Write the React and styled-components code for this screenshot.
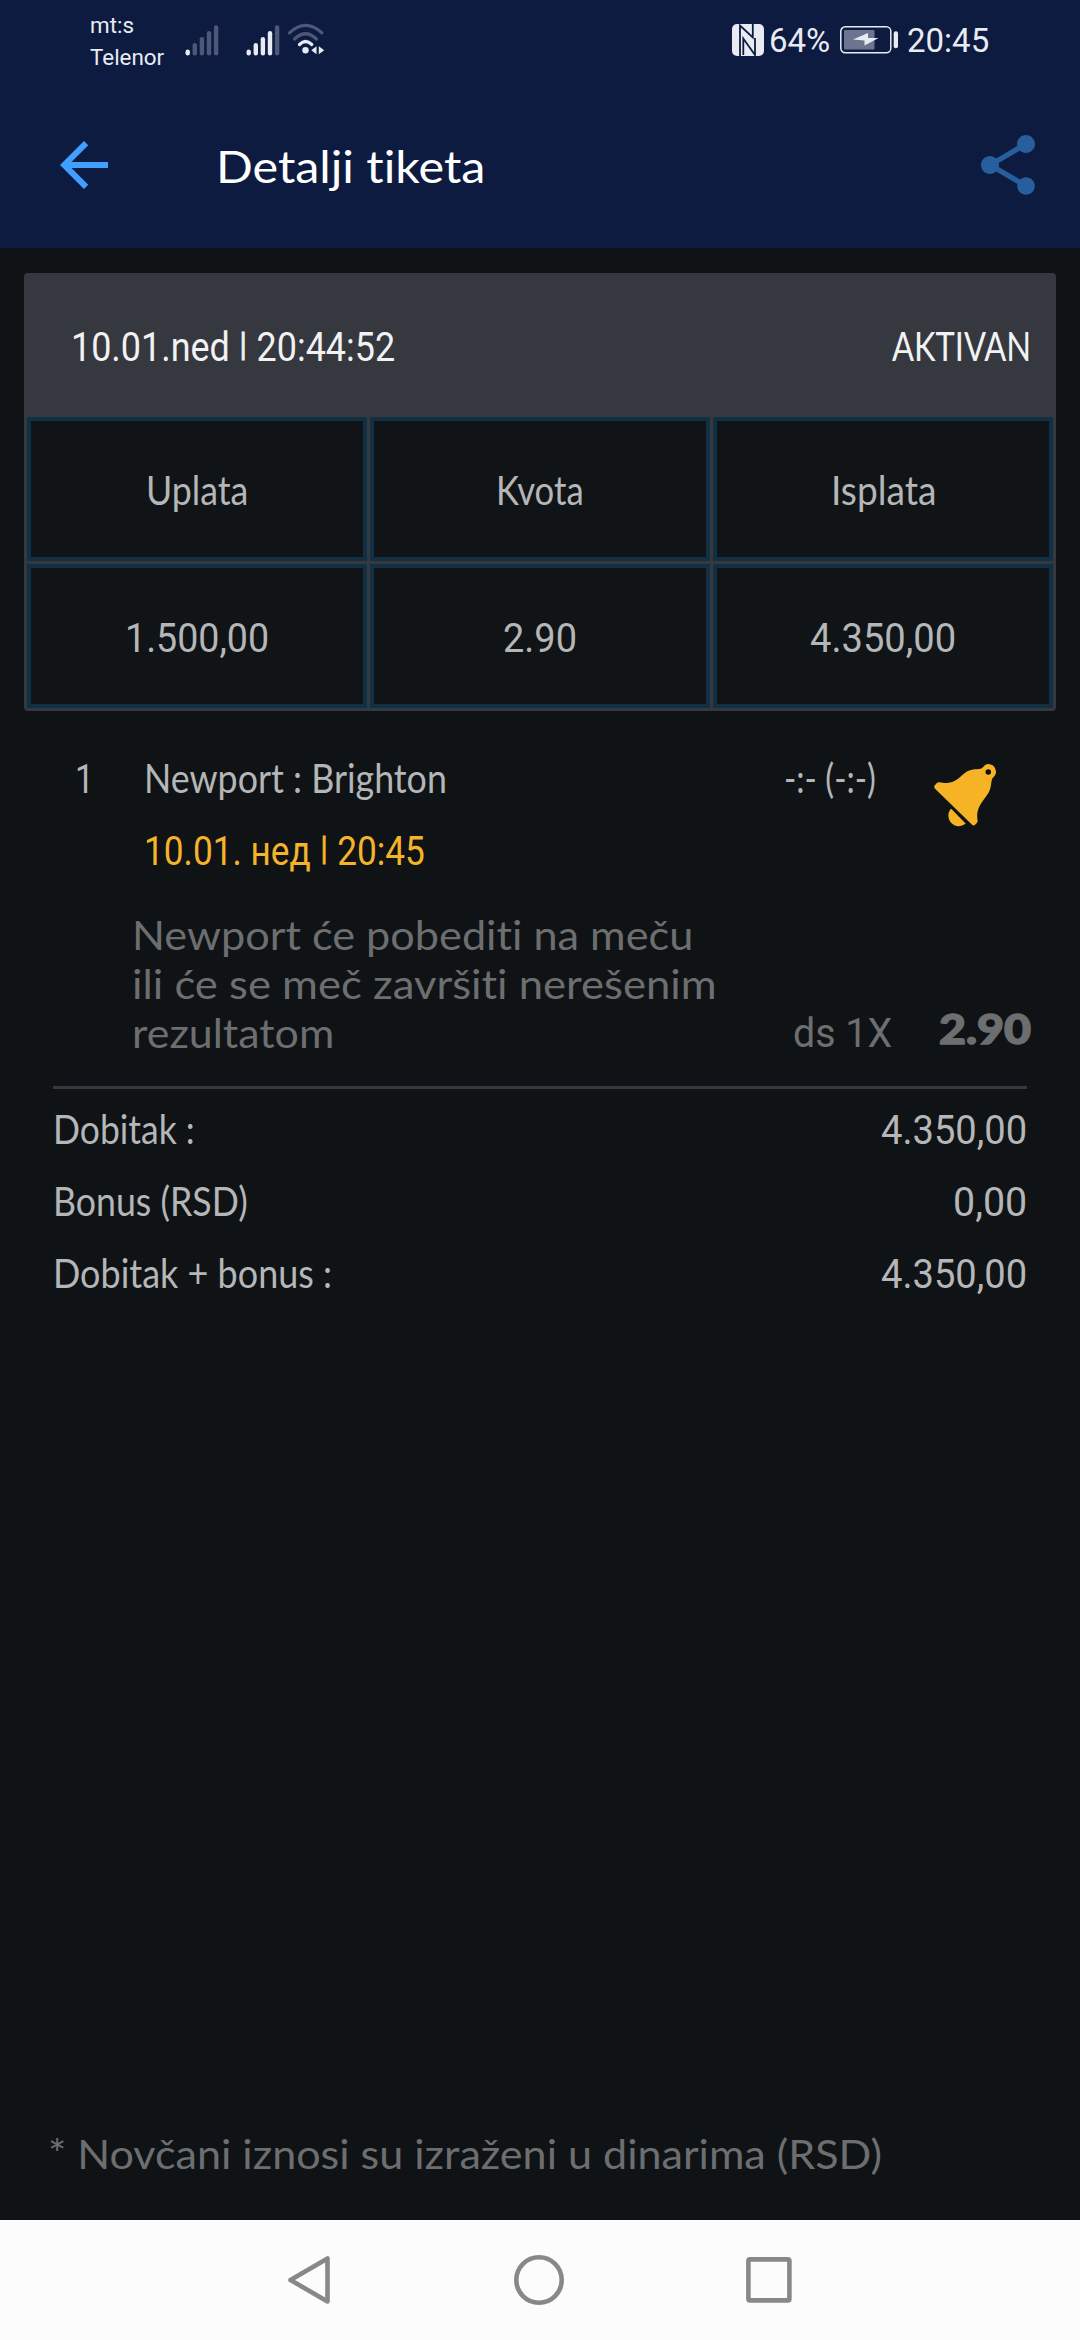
import { useLayoutEffect, useRef, useState } from "react";
import styled, { createGlobalStyle } from "styled-components";
import { MdArrowBack, MdShare } from "react-icons/md";

const stakes = [
  { text: "Uplata", width: 102 },
  { text: "Kvota", width: 88 },
  { text: "Isplata", width: 105 },
  { text: "1.500,00", width: 144 },
  { text: "2.90", width: 74 },
  { text: "4.350,00", width: 146 },
];

const totals = [
  { label: "Dobitak :", labelWidth: 142, value: "4.350,00", valueWidth: 146 },
  { label: "Bonus (RSD)", labelWidth: 195, value: "0,00", valueWidth: 74 },
  {
    label: "Dobitak + bonus :",
    labelWidth: 279,
    value: "4.350,00",
    valueWidth: 146,
  },
];

const description = [
  { text: "Newport će pobediti na meču", width: 561 },
  { text: "ili će se meč završiti nerešenim", width: 585 },
  { text: "rezultatom", width: 202 },
];

// squeezes a line of text horizontally until it takes the given width
function FitText({ width, numeric, children }) {
  const inner = useRef(null);
  const [ratio, setRatio] = useState(1);
  useLayoutEffect(() => {
    setRatio(width / inner.current.offsetWidth);
  }, [width, children]);
  return (
    <FitBox $width={width} $numeric={numeric}>
      <FitInner ref={inner} style={{ transform: `scaleX(${ratio})` }}>
        {children}
      </FitInner>
    </FitBox>
  );
}

function Signal({ level }) {
  const tops = [22.5, 16, 10, 4, -1.8];
  return (
    <svg width="34" height="36" viewBox="0 -4 34 36">
      {tops.map((top, i) => (
        <rect
          key={top}
          x={0.5 + i * 7.1}
          y={top}
          width="4.4"
          height={28.4 - top}
          rx="2.2"
          fill={i < level ? "#e9ebf3" : "#4d5879"}
        />
      ))}
    </svg>
  );
}

function Wifi() {
  return (
    <svg width="38" height="32" viewBox="0 0 38 32">
      <g fill="none" strokeWidth="3.2" strokeLinecap="round">
        <path d="M2.5 9.8Q18.5 -5 34.8 9.8" stroke="#4d5879" />
        <path d="M7.5 16Q18.5 5.5 29.5 16" stroke="#4d5879" />
        <path d="M12.5 21.5Q18.5 15.5 24.8 21.5" stroke="#e9ebf3" />
      </g>
      <circle cx="18.5" cy="27.3" r="3.2" fill="#e9ebf3" />
      <path d="M24.3 27.3l5.2-4v8z M31.8 23.3l5.4 4-5.4 4z" fill="#e9ebf3" />
    </svg>
  );
}

function Nfc() {
  return (
    <svg width="32" height="32" viewBox="0 0 32 32">
      <rect width="32" height="32" rx="5" fill="#e9ebf3" />
      <path
        d="M8 32V1.5L20.8 13.5V0M11.3 31V14.5L23 31V14"
        fill="none"
        stroke="#0e1b40"
        strokeWidth="1.8"
      />
    </svg>
  );
}

function Battery() {
  return (
    <svg width="60" height="28" viewBox="0 0 60 28">
      <rect
        x="0.8"
        y="0.8"
        width="50"
        height="26"
        rx="4.5"
        fill="none"
        stroke="#e9ebf3"
        strokeWidth="1.5"
      />
      <rect x="4" y="4" width="30.5" height="19.5" rx="1" fill="#6d7490" />
      <path d="M13 13.5L28 7v5h10.5L24.5 19.5v-5z" fill="#e9ebf3" />
      <rect x="53.7" y="5.3" width="4.3" height="17" rx="2" fill="#e9ebf3" />
    </svg>
  );
}

function Bell() {
  return (
    <svg width="62" height="63" viewBox="0 0 62 63" fill="#f5b325">
      <path
        fillRule="evenodd"
        d="M.8 24.5C-.4 22.8.6 21.2 2 20C3 18.7 4 17.9 5.5 18.3C10 19.4 15 19.2 19.5 17.5C24.5 15.4 27.5 11 31.5 8.5C36.5 4.9 41.5 5.7 46.5 4.8C49.3 4.1 50.3 0 54.3 0C58.6 0 62 3.6 62 8C62 12 58.2 13 57.7 16.5C56.8 20 57.2 23.6 55 28C52.3 33 48 37 45.6 42C43 47.4 42.8 51.5 43.6 56.3C43.8 58.3 42.5 59.3 41.3 60.6C40.1 61.9 39 61.7 37.8 60.5ZM54.3 5.2a2.8 2.8 0 1 0 0 5.6a2.8 2.8 0 1 0 0-5.6Z"
      />
      <path d="M17.2 44.8L31.6 59.4C28 62.3 24 63 20.4 61.2C16 59 14.2 55 14.4 50.6C14.6 48.3 15.6 46 17.2 44.8Z" />
    </svg>
  );
}

export default function App() {
  return (
    <Screen>
      <GlobalStyle />
      <StatusBar>
        <Carriers>
          <span>mt:s</span>
          <span>Telenor</span>
        </Carriers>
        <SignalSlot $left={22}>
          <Signal level={1} />
        </SignalSlot>
        <SignalSlot $left={27}>
          <Signal level={4} />
        </SignalSlot>
        <SignalSlot $left={7}>
          <Wifi />
        </SignalSlot>
        <StatusRight>
          <Nfc />
          <StatusText $left={5} $width={64}>64%</StatusText>
          <Battery />
          <StatusText $left={7} $width={84}>20:45</StatusText>
        </StatusRight>
      </StatusBar>
      <AppBar>
        <MdArrowBack size={72} color="#409fff" />
        <Title>
          <FitText width={269}>Detalji tiketa</FitText>
        </Title>
        <MdShare size={72} color="#275e9d" />
      </AppBar>

      <Ticket>
        <TicketHeader>
          <FitText width={324} numeric>
            10.01.ned <Pipe>|</Pipe> 20:44:52
          </FitText>
          <FitText width={139}>AKTIVAN</FitText>
        </TicketHeader>
        <StakeGrid>
          {stakes.map(({ text, width }) => (
            <StakeCell key={text}>
              <FitText width={width} numeric={/\d/.test(text)}>
                {text}
              </FitText>
            </StakeCell>
          ))}
        </StakeGrid>
      </Ticket>

      <Match>
        <MatchRow>
          <MatchIndex>
            <FitText width={19} numeric>
              1
            </FitText>
          </MatchIndex>
          <MatchInfo>
            <FitText width={303}>Newport : Brighton</FitText>
            <Kickoff>
              <FitText width={281} numeric>
                10.01. нед <Pipe>|</Pipe> 20:45
              </FitText>
            </Kickoff>
          </MatchInfo>
          <Score>
            <FitText width={92}>-:- (-:-)</FitText>
          </Score>
          <BellSlot>
            <Bell />
          </BellSlot>
        </MatchRow>
        <BetRow>
          <Description>
            {description.map(({ text, width }) => (
              <FitText key={text} width={width}>
                {text}
              </FitText>
            ))}
          </Description>
          <Pick>
            <FitText width={99} numeric>
              ds 1X
            </FitText>
          </Pick>
          <Odds>
            <FitText width={92}>2.90</FitText>
          </Odds>
        </BetRow>
      </Match>

      <Totals>
        {totals.map((row) => (
          <TotalRow key={row.label}>
            <FitText width={row.labelWidth}>{row.label}</FitText>
            <FitText width={row.valueWidth} numeric>
              {row.value}
            </FitText>
          </TotalRow>
        ))}
      </Totals>

      <Footnote>
        <FitText width={834}>* Novčani iznosi su izraženi u dinarima (RSD)</FitText>
      </Footnote>
      <NavBar>
        <svg width="46" height="50" viewBox="0 0 46 50">
          <path d="M41.5 3.5v43L4.5 25z" />
        </svg>
        <svg width="50" height="50" viewBox="0 0 50 50">
          <circle cx="25" cy="25" r="22.7" />
        </svg>
        <svg width="46" height="46" viewBox="0 0 46 46">
          <rect x="2.4" y="2.4" width="41" height="41" rx="1.5" />
        </svg>
      </NavBar>
    </Screen>
  );
}

const GlobalStyle = createGlobalStyle`
  * {
    box-sizing: border-box;
  }
  body {
    margin: 0;
    background: #0f1315;
  }
  svg {
    display: block;
    flex-shrink: 0;
  }
`;

const Screen = styled.div`
  width: 1080px;
  height: 2340px;
  display: flex;
  flex-direction: column;
  overflow: hidden;
  background: #0f1315;
  color: #b5b6b7;
  font-family: Lato, "Open Sans", sans-serif;
  font-size: 41px;
  font-variant-ligatures: none;
  line-height: 50px;
`;

const FitBox = styled.span`
  display: block;
  flex-shrink: 0;
  width: ${({ $width }) => $width}px;
  font-family: ${({ $numeric }) =>
    $numeric ? "Roboto, sans-serif" : "inherit"};
  white-space: nowrap;
  transform: translateY(${({ $numeric }) => ($numeric ? 2 : 1)}px);
`;

const FitInner = styled.span`
  display: inline-block;
  vertical-align: top;
  transform-origin: left center;
`;

const Pipe = styled.span`
  margin: 0 1px;
  font-size: 34px;
  line-height: 0;
  vertical-align: 5px;
  -webkit-text-stroke: 0.8px currentColor;
`;

const StatusBar = styled.div`
  display: flex;
  align-items: flex-start;
  height: 82px;
  padding-left: 90px;
  background: #0e1b40;
  color: #e9ebf3;
  font-family: Roboto, sans-serif;
`;

const Carriers = styled.div`
  display: flex;
  flex-direction: column;
  width: 73px;
  padding-top: 9px;
  font-size: 22.4px;
  line-height: 32px;
`;

const SignalSlot = styled.div`
  padding-top: 24px;
  margin-left: ${({ $left }) => $left}px;
  svg {
    margin-top: -1px;
  }
`;

const StatusRight = styled.div`
  display: flex;
  align-items: center;
  height: 80px;
  margin-left: auto;
  padding-right: 82px;
`;

const StatusText = styled.span`
  width: ${({ $width }) => $width}px;
  margin-left: ${({ $left }) => $left}px;
  margin-right: 7px;
  padding-top: 2px;
  font-size: 33px;
  line-height: 40px;
`;

const AppBar = styled.header`
  display: flex;
  align-items: center;
  height: 166px;
  padding: 0 36px 0 48px;
  background: #0e1b40;
`;

const Title = styled.div`
  flex: 1;
  padding-left: 96px;
  color: #fff;
  font-size: 45px;
  line-height: 56px;
`;

const Ticket = styled.section`
  margin: 25px 24px 0;
  overflow: hidden;
  border-radius: 4px;
  background: #36383f;
`;

const TicketHeader = styled.div`
  display: flex;
  align-items: center;
  justify-content: space-between;
  height: 144px;
  padding: 0 25px 0 47px;
  color: #f2f2f3;
`;

const StakeGrid = styled.div`
  display: grid;
  grid-template-columns: repeat(3, 340px);
  grid-auto-rows: 144px;
  gap: 3px;
  padding: 0 3px 3px;
`;

const StakeCell = styled.div`
  display: flex;
  align-items: center;
  justify-content: center;
  border: 4px solid #123044;
  background: #101416;
`;

const Match = styled.section`
  margin: 41px 53px 0;
  height: 337px;
  border-bottom: 3px solid #36383f;
`;

const MatchRow = styled.div`
  display: flex;
  align-items: flex-start;
`;

const MatchIndex = styled.div`
  width: 91px;
  padding-left: 22px;
`;

const MatchInfo = styled.div`
  width: 640px;
`;

const Kickoff = styled.div`
  margin-top: 22px;
  color: #f5b32b;
`;

const Score = styled.div`
  width: 97px;
`;

const BellSlot = styled.div`
  margin: 12px 0 0 53px;
`;

const BetRow = styled.div`
  display: flex;
  align-items: flex-end;
  margin-top: 35px;
  color: #6d6e70;
  line-height: 49px;
`;

const Description = styled.div`
  flex-shrink: 0;
  width: 660px;
  padding-left: 79px;
`;

const Pick = styled.div`
  flex-shrink: 0;
  width: 226px;
  padding-left: 80px;
`;

const Odds = styled.div`
  padding-bottom: 4px;
  font-weight: 900;
  -webkit-text-stroke: 1.4px #6d6e70;
`;

const Totals = styled.section`
  margin: 14px 53px 0;
`;

const TotalRow = styled.div`
  display: flex;
  justify-content: space-between;
  height: 72px;
  line-height: 50px;
`;

const Footnote = styled.footer`
  margin: auto 48px 42px;
  color: #6d6e70;
`;

const NavBar = styled.nav`
  display: flex;
  flex-shrink: 0;
  align-items: center;
  justify-content: space-between;
  height: 120px;
  padding: 0 288px 0 286px;
  background: #fcfcfc;
  svg {
    fill: none;
    stroke: #888;
    stroke-width: 4.6;
    stroke-linejoin: round;
  }
`;
